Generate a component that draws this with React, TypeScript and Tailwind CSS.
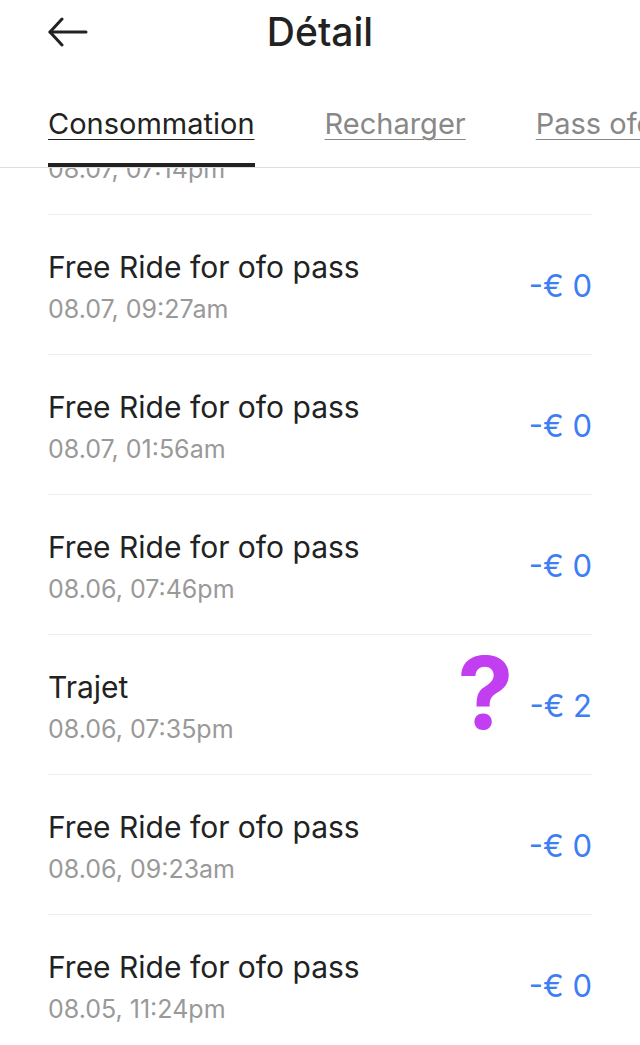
const rows = [
  { title: "Free Ride for ofo pass", date: "08.07, 07:14pm", amount: "-€ 0" },
  { title: "Free Ride for ofo pass", date: "08.07, 09:27am", amount: "-€ 0" },
  { title: "Free Ride for ofo pass", date: "08.07, 01:56am", amount: "-€ 0" },
  { title: "Free Ride for ofo pass", date: "08.06, 07:46pm", amount: "-€ 0" },
  { title: "Trajet", date: "08.06, 07:35pm", amount: "-€ 2", mark: true },
  { title: "Free Ride for ofo pass", date: "08.06, 09:23am", amount: "-€ 0" },
  { title: "Free Ride for ofo pass", date: "08.05, 11:24pm", amount: "-€ 0" },
  { title: "Free Ride for ofo pass", date: "08.05, 08:02pm", amount: "-€ 0" },
];

const App = () => {
  return (
    <div className="w-[640px] h-[1045px] bg-white overflow-hidden flex flex-col font-['Inter','Liberation_Sans',sans-serif]">
      {/* header */}
      <div className="h-[64px] flex items-center relative px-[48px]">
        <svg width="40" height="30" viewBox="0 0 40 30" fill="none" stroke="#222" strokeWidth="3" strokeLinecap="round" strokeLinejoin="round">
          <path d="M2 15 H38" />
          <path d="M14 2 L2 15 L14 28" />
        </svg>
        <div className="absolute inset-x-0 top-0 h-[64px] flex items-center justify-center text-[39px] font-medium text-[#222] pointer-events-none">
          Détail
        </div>
      </div>

      {/* tabs */}
      <div className="h-[104px] flex items-end gap-[70px] px-[48px] border-b border-[#ddd] whitespace-nowrap overflow-hidden">
        <div className="flex flex-col shrink-0">
          <span className="text-[29px] leading-[40px] text-[#222] underline underline-offset-[5px] decoration-[1px]">Consommation</span>
          <div className="mt-[19px] h-[4px] bg-[#222]"></div>
        </div>
        <div className="flex flex-col shrink-0">
          <span className="text-[29px] leading-[40px] text-[#888] underline underline-offset-[5px] decoration-[1px]">Recharger</span>
          <div className="mt-[19px] h-[4px]"></div>
        </div>
        <div className="flex flex-col shrink-0">
          <span className="text-[29px] leading-[40px] text-[#888] underline underline-offset-[5px] decoration-[1px]">Pass ofo</span>
          <div className="mt-[19px] h-[4px]"></div>
        </div>
      </div>

      {/* list */}
      <div className="flex-1 overflow-hidden">
        <div className="-mt-[93px]">
          {rows.map((r, i) => (
            <div key={i} className="px-[48px]">
              <div className="h-[140px] border-b border-[#eee] flex items-center">
                <div className="flex-1 pt-[3px]">
                  <div className="text-[30px] leading-[38px] text-[#222]">{r.title}</div>
                  <div className="mt-[8px] text-[25px] leading-[30px] text-[#999]">{r.date}</div>
                </div>
                {r.mark && (
                  <span className="mr-[16px] -mt-[24px] text-[100px] leading-none font-bold text-[#c13ff0]">?</span>
                )}
                <div className="pt-[4px] text-[31px] text-[#3d7ef5] whitespace-pre">{r.amount}</div>
              </div>
            </div>
          ))}
        </div>
      </div>
    </div>
  );
};

export default App;
